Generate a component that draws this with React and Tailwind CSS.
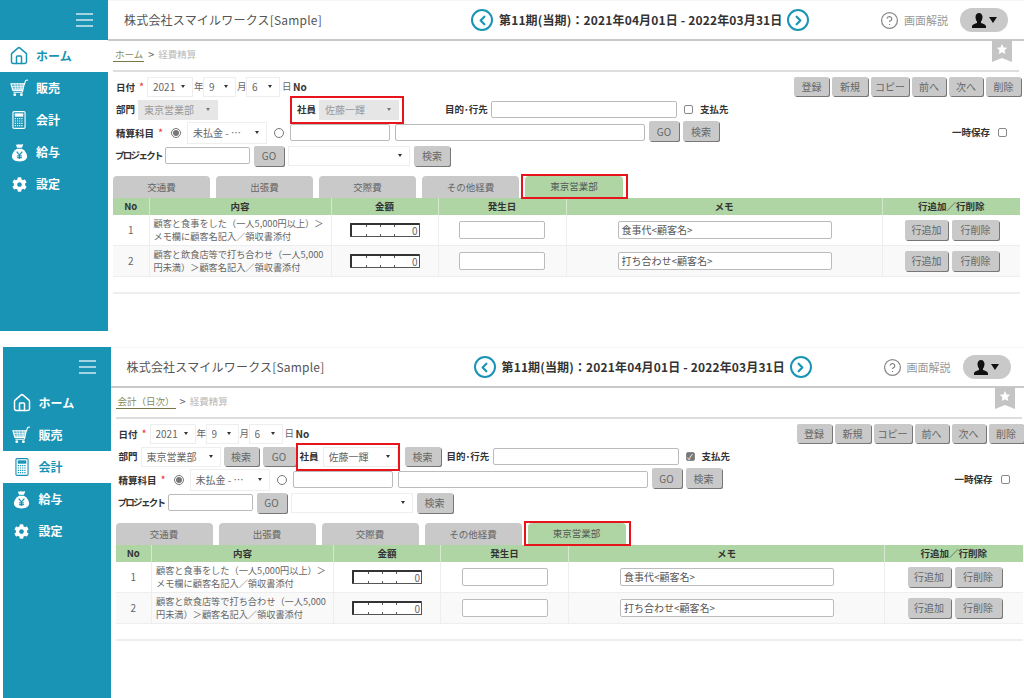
import { CircleHelp, ChevronLeft, ChevronRight, House } from 'lucide-react'
import { FaCog } from 'react-icons/fa'

const tabs = ['交通費', '出張費', '交際費', 'その他経費']
const topButtons = [
  { label: '登録', width: 'w-[35px]' },
  { label: '新規', width: 'w-[36px]' },
  { label: 'コピー', width: 'w-[38px]' },
  { label: '前へ', width: 'w-[34px]' },
  { label: '次へ', width: 'w-[34px]' },
  { label: '削除', width: 'w-[35px]' },
]

const rows = [
  { no: 1, height: 'h-[30px]', lines: ['顧客と食事をした（一人5,000円以上）＞', 'メモ欄に顧客名記入／領収書添付'], memo: '食事代<顧客名>' },
  { no: 2, height: 'h-[31px]', lines: ['顧客と飲食店等で打ち合わせ（一人5,000', '円未満）＞顧客名記入／領収書添付'], memo: '打ち合わせ<顧客名>' },
]

function MoneyBag({ className }) {
  return (
    <svg viewBox="0 0 18 20" className={className} fill="currentColor">
      <path d="M5 1.5c1.2.8 2.6-.6 4 0s2.8-.8 4 0L11.5 5h-5z" />
      <path d="M6.5 6h5C15 8 17 11 17 14c0 3.5-3 5.5-8 5.5S1 17.5 1 14c0-3 2-6 5.5-8z" />
      <path d="M6 9l3 3.5L12 9M9 12.5V17M6.5 13.5h5M6.5 15.5h5" fill="none" stroke="#1a94b5" strokeWidth="1.3" />
    </svg>
  )
}

function Cart({ className }) {
  return (
    <svg viewBox="0 0 20 19" className={className} fill="none" stroke="currentColor">
      <path d="M1 5h14l-1.5 7H3z" fill="currentColor" fillOpacity="0.35" strokeWidth="1.2" />
      <path d="M5 5l1 7M8 5l.3 7M11 5l-.3 7M13 5l-1 7M1.5 8h13M2.5 10.5h11" strokeWidth="0.7" />
      <path d="M15 6l1.5-4.5L19 1M13.5 12l-.6 2H3.5" strokeWidth="1.2" />
      <circle cx="5" cy="16.5" r="1.5" fill="currentColor" stroke="none" />
      <circle cx="12" cy="16.5" r="1.5" fill="currentColor" stroke="none" />
    </svg>
  )
}

function Calc({ className }) {
  return (
    <svg viewBox="0 0 14 19" className={className} fill="none" stroke="currentColor">
      <rect x="0.6" y="0.6" width="12.8" height="17.8" rx="1.2" strokeWidth="1.2" />
      <rect x="2.5" y="2.5" width="9" height="3.5" fill="currentColor" stroke="none" />
      <path d="M2.5 8h9M2.5 10.5h9M2.5 13h9M2.5 15.5h9" strokeWidth="1.2" strokeDasharray="1.3 1" />
    </svg>
  )
}

const navItems = [
  { label: 'ホーム', icon: <House size={20} strokeWidth={1.8} /> },
  { label: '販売', icon: <Cart className="h-[18px] w-[19px]" /> },
  { label: '会計', icon: <Calc className="h-[18px] w-[14px]" /> },
  { label: '給与', icon: <MoneyBag className="h-[19px] w-[17px]" /> },
  { label: '設定', icon: <FaCog size={15} /> },
]

function Sidebar({ active }) {
  return (
    <aside className="flex w-[108px] shrink-0 flex-col bg-[#1a94b5] text-white">
      <div className="flex h-10 items-center justify-end pr-[15px]">
        <div className="flex w-[17px] flex-col gap-[4px]">
          <span className="h-[2px] bg-white/60" />
          <span className="h-[2px] bg-white/60" />
          <span className="h-[2px] bg-white/60" />
        </div>
      </div>
      {navItems.map((item, i) => (
        <div
          key={item.label}
          className={`flex h-8 items-center text-[12px] font-bold ${i === active ? 'bg-white text-[#1a94b5]' : ''}`}
        >
          <span className="flex w-9 shrink-0 items-center justify-center pl-[2px]">{item.icon}</span>
          {item.label}
        </div>
      ))}
    </aside>
  )
}

function CircleArrow({ children }) {
  return (
    <span className="flex h-[22px] w-[22px] shrink-0 items-center justify-center rounded-full border-2 border-[#1a94b5] text-[#1a94b5]">
      {children}
    </span>
  )
}

function Header() {
  return (
    <header className="flex h-[41px] shrink-0 items-center border-t border-b-2 border-t-[#f6f6f6] border-b-[#c9c9c9] bg-white text-[#555]">
      <div className="ml-4 w-[347px] text-[12px] tracking-[0.2px]">株式会社スマイルワークス[Sample]</div>
      <CircleArrow>
        <ChevronLeft size={15} strokeWidth={3.5} />
      </CircleArrow>
      <div className="ml-[6px] w-[283px] text-[12px] font-bold tracking-[0.15px] whitespace-nowrap text-[#333]">
        第11期(当期)：2021年04月01日 - 2022年03月31日
      </div>
      <span className="ml-[5px]">
        <CircleArrow>
          <ChevronRight size={15} strokeWidth={3.5} />
        </CircleArrow>
      </span>
      <CircleHelp size={19} strokeWidth={1.6} className="ml-[71px] text-[#888]" />
      <span className="ml-[5px] text-[11px] text-[#999]">画面解説</span>
      <div className="ml-3 flex h-6 w-[48px] items-center justify-center gap-[3px] rounded-full bg-[#c9c9c9] text-[#111]">
        <svg viewBox="0 0 14 16" className="h-4 w-[14px]" fill="currentColor">
          <path d="M7 1c2.2 0 3.5 1.8 3.5 4S9.5 9 9 9.5V11c2 .8 5 1.5 5 3.5V16H0v-1.500C0 12.500 3 11.800 5 11V9.500C4.500 9 3.500 7.200 3.500 5S4.800 1 7 1z" />
        </svg>
        <span className="h-0 w-0 border-x-[4px] border-t-[6px] border-x-transparent border-t-[#111]" />
      </div>
    </header>
  )
}

function Label({ children, required, className = '' }) {
  return (
    <span className={`shrink-0 text-[9.5px] font-bold whitespace-nowrap text-[#333] ${className}`}>
      {children}
      {required ? <span className="ml-[4px] text-[11px] font-normal text-[#e33]">*</span> : null}
    </span>
  )
}

function Select({ value, className = '', disabled }) {
  return (
    <div
      className={`flex shrink-0 items-center justify-between border pr-[7px] pl-[5px] text-[10px] ${
        disabled ? 'border-[#e6e6e6] bg-[#e6e6e6] text-[#999]' : 'border-[#eee] bg-white text-[#666]'
      } ${className}`}
    >
      <span className="truncate">{value}</span>
      <span
        className={`h-0 w-0 border-x-[2.5px] border-t-[3px] border-x-transparent ${
          disabled ? 'border-t-[#777]' : 'border-t-[#333]'
        }`}
      />
    </div>
  )
}

function Input({ value, className = '' }) {
  return (
    <input
      readOnly
      value={value ?? ''}
      className={`shrink-0 rounded-[2px] border border-[#bbb] bg-white px-[3px] text-[10px] text-[#555] outline-none ${className}`}
    />
  )
}

function Btn({ children, className = '' }) {
  return (
    <button
      type="button"
      className={`flex shrink-0 items-center justify-center rounded-[2px] bg-[#c9c9c9] text-[10px] text-[#666] shadow-[1px_1px_0_#777] ${className}`}
    >
      {children}
    </button>
  )
}

function Radio({ checked, className = '' }) {
  return (
    <span className={`flex h-[10px] w-[10px] shrink-0 items-center justify-center rounded-full border border-[#777] bg-white ${className}`}>
      {checked ? <span className="h-[6px] w-[6px] rounded-full bg-[#777]" /> : null}
    </span>
  )
}

function Check({ checked, className = '' }) {
  return (
    <span
      className={`flex h-[9px] w-[9px] shrink-0 items-center justify-center rounded-[2px] border border-[#888] text-[8px] leading-none text-white ${
        checked ? 'bg-[#777]' : 'bg-white'
      } ${className}`}
    >
      {checked ? '✓' : null}
    </span>
  )
}

function AmountInput() {
  return (
    <div className="relative mx-auto flex h-[14px] w-[70px] items-center justify-end rounded-[1px] border border-t-2 border-l-2 border-[#555] border-t-[#333] border-l-[#333] bg-white pr-[1px] text-[10px] text-[#666]">
      {[14, 28, 42].map((x) => (
        <span key={x} className="absolute inset-y-0 flex flex-col justify-between" style={{ left: x }}>
          <span className="h-[2px] w-px bg-[#555]" />
          <span className="h-[2px] w-px bg-[#555]" />
        </span>
      ))}
      0
    </div>
  )
}

function ExpenseTable() {
  return (
    <table className="w-[907px] table-fixed border-collapse text-[9.2px] text-[#666]">
      <colgroup>
        <col className="w-[36px]" />
        <col className="w-[182px]" />
        <col className="w-[107px]" />
        <col className="w-[128px]" />
        <col className="w-[316px]" />
        <col className="w-[138px]" />
      </colgroup>
      <thead>
        <tr className="h-[17px] bg-[#afd5a4] text-[9.5px] font-bold text-[#333]">
          {['No', '内容', '金額', '発生日', 'メモ', '行追加／行削除'].map((h) => (
            <th key={h} className="border-x border-[#d5e8cf] font-bold first:border-l-0 last:border-r-0">
              {h}
            </th>
          ))}
        </tr>
      </thead>
      <tbody>
        {rows.map((row, i) => (
          <tr key={row.no} className={`${row.height} border-b border-[#eee] ${i === 1 ? 'bg-[#f9f9f9]' : 'bg-white'}`}>
            <td className="border-r border-[#eee] text-center text-[10px]">{row.no}</td>
            <td className="border-r border-[#eee] pl-[4px] leading-[13px] whitespace-nowrap">
              {row.lines.map((line) => (
                <div key={line}>{line}</div>
              ))}
            </td>
            <td className="border-r border-[#eee]">
              <AmountInput />
            </td>
            <td className="border-r border-[#eee]">
              <Input className="mx-auto block h-[18px] w-[86px]" />
            </td>
            <td className="border-r border-[#eee]">
              <Input value={row.memo} className="ml-[51px] block h-[18px] w-[214px]" />
            </td>
            <td>
              <div className="flex justify-end gap-[4px] pr-[21px]">
                <Btn className="h-5 w-[43px]">行追加</Btn>
                <Btn className="h-5 w-[47px]">行削除</Btn>
              </div>
            </td>
          </tr>
        ))}
      </tbody>
    </table>
  )
}

function Screen({ active, crumb, editable, className = '' }) {
  return (
    <section className={`flex w-[1024px] shrink-0 ${className}`}>
      <Sidebar active={active} />
      <main className="relative flex min-w-0 flex-1 flex-col bg-white">
        <Header />
        {/* ブックマーク */}
        <svg viewBox="0 0 20 22" className="absolute top-[40px] left-[884px] h-[22px] w-5">
          <path d="M0 0h20v22l-10-4-10 4z" fill="#c4c4c4" />
          <path d="M10 4l1.6 3.4 3.7.4-2.8 2.5.8 3.700L10 12.200 6.700 14l.8-3.700L4.700 7.800l3.700-.4z" fill="#fff" />
        </svg>
        <div className="mx-[5px] flex h-[31px] shrink-0 items-center border-b-2 border-[#ddd] pb-[2px] text-[9.5px]">
          <span className="border-b border-[#77774a] pr-[1px] pl-[2px] text-[#88885a]">{crumb}</span>
          <span className="ml-[4px] text-[11px] text-[#666]">&gt;</span>
          <span className="ml-[4px] text-[#bbb]">経費精算</span>
        </div>

        <div className="flex flex-col pt-[4px] pl-[8px]">
          <div className="mb-[1px] flex h-[21px] items-center">
            <Label required className="w-[28px]">日付</Label>
            <Select value="2021" className="ml-[3px] h-5 w-[46px]" />
            <span className="ml-[1px] w-[9px] text-[9.5px] text-[#666]">年</span>
            <Select value="9" className="h-5 w-[33px]" />
            <span className="ml-[1px] w-[9px] text-[9.5px] text-[#666]">月</span>
            <Select value="6" className="h-5 w-[34px]" />
            <span className="ml-[2px] w-[11px] text-[9.5px] text-[#666]">日</span>
            <Label className="text-[10px]">No</Label>
            <div className="ml-auto flex gap-[3px] pr-[3px]">
              {topButtons.map((b) => (
                <Btn key={b.label} className={`h-[19px] ${b.width}`}>
                  {b.label}
                </Btn>
              ))}
            </div>
          </div>

          <div className="flex h-[23px] items-center">
            <Label className="w-[22px]">部門</Label>
            {editable ? (
              <>
                <Select value="東京営業部" className="h-5 w-[80px]" />
                <Btn className="ml-[3px] h-[19px] w-[35px]">検索</Btn>
                <Btn className="ml-[4px] h-[19px] w-[33px]">GO</Btn>
                <div className="-my-[3px] flex h-[28px] w-[104px] items-center border-2 border-[#e8141c] pl-[2px]">
                  <Label className="w-[22px]">社員</Label>
                  <Select value="佐藤一輝" className="ml-[1px] h-5 w-[75px]" />
                </div>
                <Btn className="ml-[5px] h-[19px] w-[36px]">検索</Btn>
                <Label className="ml-[6px] w-[42px]">目的･行先</Label>
              </>
            ) : (
              <>
                <Select value="東京営業部" disabled className="h-5 w-[80px]" />
                <div className="-my-[3px] ml-[72px] flex h-[28px] w-[114px] items-center border-2 border-[#e8141c] pl-[5px]">
                  <Label className="w-[22px]">社員</Label>
                  <Select value="佐藤一輝" disabled className="h-5 w-[80px]" />
                </div>
                <Label className="ml-[41px] w-[42px]">目的･行先</Label>
              </>
            )}
            <Input className="ml-[4px] h-[17px] w-[186px]" />
            <Check checked={editable} className="ml-[7px]" />
            <Label className="ml-[7px]">支払先</Label>
          </div>

          <div className="flex h-[23px] items-center">
            <Label required className="w-[47px]">精算科目</Label>
            <Radio checked className="ml-[8px]" />
            <Select value="未払金 - …" className="ml-[6px] h-[22px] w-[80px]" />
            <Radio className="ml-[7px]" />
            <Input className="ml-[6px] h-[17px] w-[100px]" />
            <Input className="ml-[5px] h-[17px] w-[250px]" />
            <Btn className="mb-[3px] ml-[4px] h-5 w-[30px]">GO</Btn>
            <Btn className="mb-[3px] ml-[4px] h-5 w-[36px]">検索</Btn>
            <Label className="ml-[233px] w-[38px]">一時保存</Label>
            <Check className="ml-[8px]" />
          </div>

          <div className="flex h-[23px] items-center">
            <Label className="-ml-[1px] w-[46px] tracking-[-1.7px]">プロジェクト</Label>
            <Input className="ml-[4px] h-[17px] w-[85px]" />
            <Btn className="ml-[4px] h-5 w-[30px]">GO</Btn>
            <Select value="" className="ml-[4px] h-[20px] w-[122px]" />
            <Btn className="ml-[4px] h-5 w-[36px]">検索</Btn>
          </div>
        </div>

        <div className="mt-[7px] flex items-start pl-[5px]">
          {tabs.map((t) => (
            <div
              key={t}
              className="mt-[2px] mr-[6px] flex h-[22px] w-[97px] items-center justify-center rounded-t-[4px] bg-[#c9c9c9] text-[9.5px] text-[#666]"
            >
              {t}
            </div>
          ))}
          <div className="relative z-10 -mb-[1px] -ml-[4px] border-2 border-[#e8141c] pr-[3px] pl-[2px]">
            <div className="flex h-[21px] w-[98px] items-center justify-center rounded-t-[4px] bg-[#afd5a4] text-[9.5px] text-[#555]">
              東京営業部
            </div>
          </div>
        </div>

        <div className="pl-[5px]">
          <ExpenseTable />
          <div className="mt-[15px] h-[2px] w-[907px] bg-[#eee]" />
        </div>
      </main>
    </section>
  )
}

export default function App() {
  return (
    <div className="flex h-[698px] w-[1024px] flex-col overflow-hidden bg-white font-['Noto_Sans_CJK_JP','Noto_Sans',sans-serif]">
      <Screen active={0} crumb="ホーム" className="h-[331px]" />
      <Screen active={2} crumb="会計（日次）" editable className="mt-[16px] ml-[2.5px] h-[351px]" />
    </div>
  )
}
